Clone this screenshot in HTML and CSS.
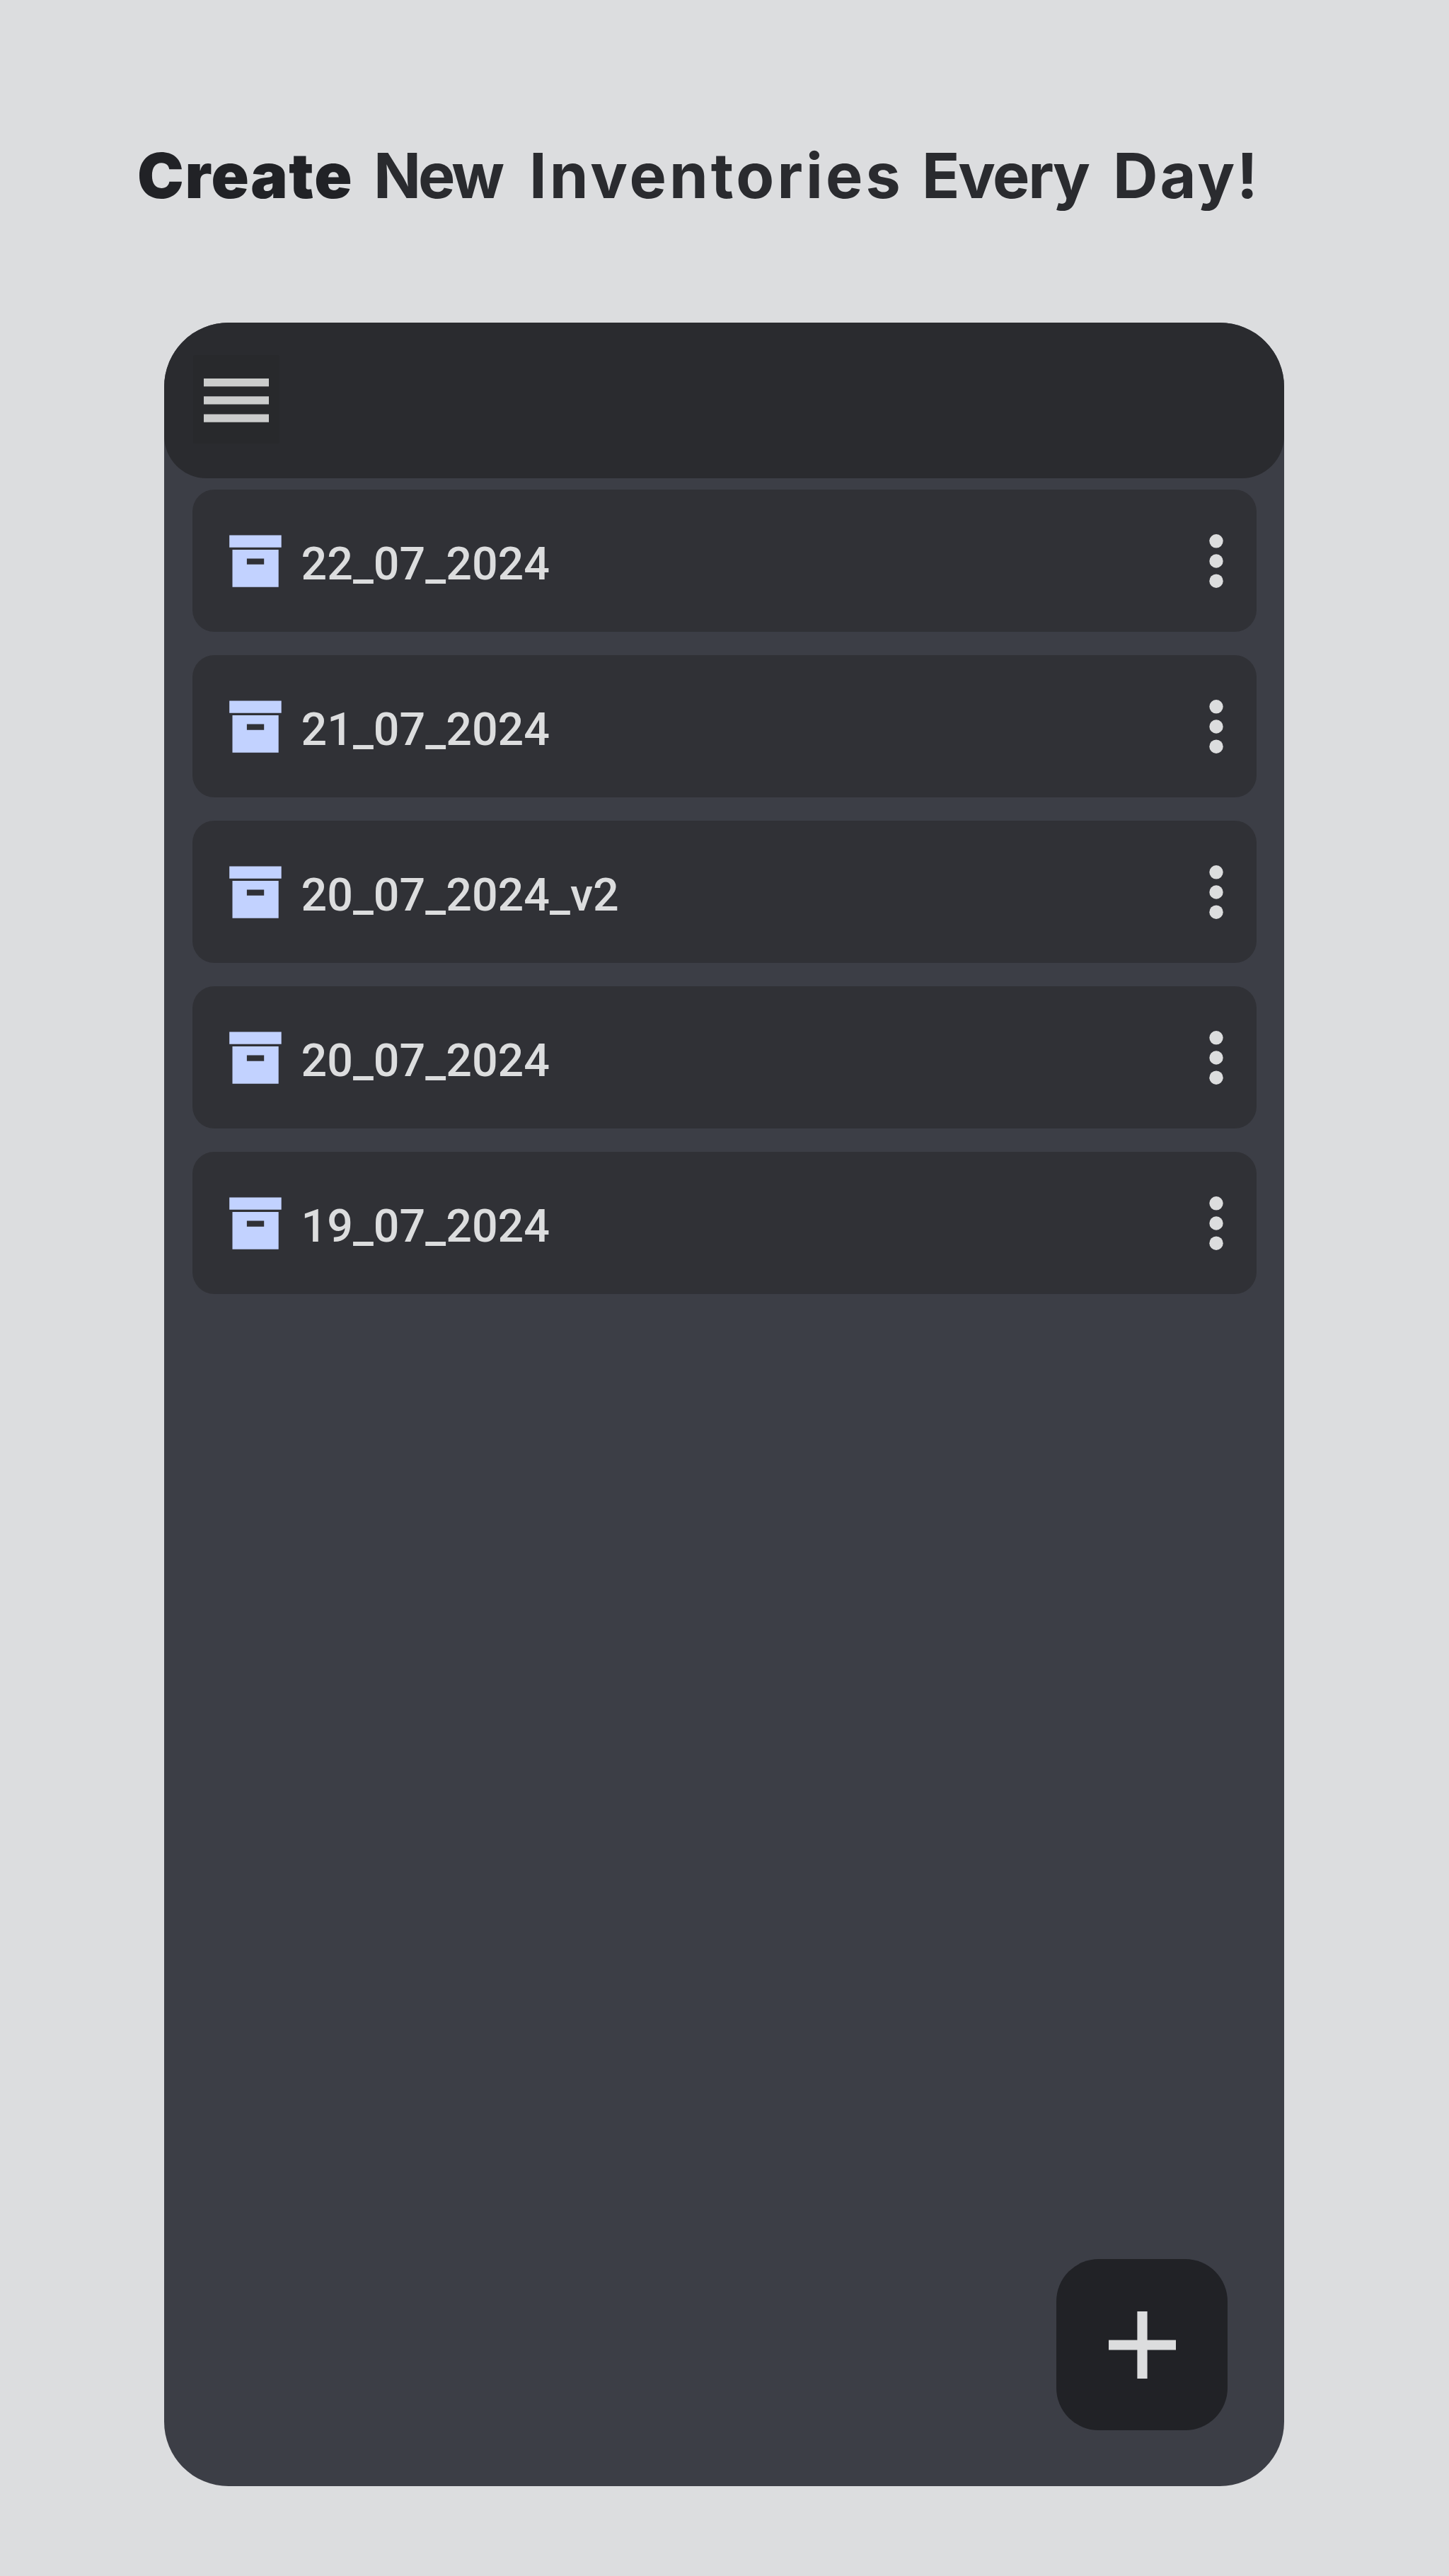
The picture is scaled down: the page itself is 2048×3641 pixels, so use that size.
FILE: index.html
```html
<!DOCTYPE html>
<html lang="en">
<head>
<meta charset="utf-8">
<title>Create New Inventories Every Day!</title>
<link rel="stylesheet" href="styles.css">
</head>
<body>
<svg class="sprite" aria-hidden="true">
  <symbol id="archive" viewBox="0 0 74 74">
    <path d="M.2 .5h73.5v17.2H.2zM4.5 21h65.2v52.7H4.5zM24.9 33.5v8.3h24.3v-8.3z" fill-rule="evenodd"/>
  </symbol>
  <symbol id="more" viewBox="0 0 20 76">
    <circle cx="10" cy="9.8" r="9.7"/><circle cx="10" cy="38" r="9.7"/><circle cx="10" cy="66.2" r="9.7"/>
  </symbol>
</svg>
<h1 class="headline">
  <strong class="create">Create</strong>
  <span class="new">New</span>
  <span class="inventories">Inventories</span>
  <span class="every">Every</span>
  <span class="day">Day!</span>
</h1>
<main class="screen">
  <header class="bar">
    <button class="menu" aria-label="Menu">
      <svg viewBox="0 0 92 62"><path d="M0 0h92v11.2H0zM0 25.3h92v11.2H0zM0 50.5h92v11.2H0z"/></svg>
    </button>
  </header>
  <ul class="list">
    <li class="card"><svg class="archive"><use href="#archive"/></svg><span class="name">22_07_2024</span><svg class="more"><use href="#more"/></svg></li>
    <li class="card"><svg class="archive"><use href="#archive"/></svg><span class="name">21_07_2024</span><svg class="more"><use href="#more"/></svg></li>
    <li class="card"><svg class="archive"><use href="#archive"/></svg><span class="name">20_07_2024_v2</span><svg class="more"><use href="#more"/></svg></li>
    <li class="card"><svg class="archive"><use href="#archive"/></svg><span class="name">20_07_2024</span><svg class="more"><use href="#more"/></svg></li>
    <li class="card"><svg class="archive"><use href="#archive"/></svg><span class="name">19_07_2024</span><svg class="more"><use href="#more"/></svg></li>
  </ul>
  <button class="add" aria-label="Add inventory">
    <svg viewBox="0 0 95 95"><path d="M40.4 0h14.2v40.4H95v14.2H54.6V95H40.4V54.6H0V40.4h40.4z"/></svg>
  </button>
</main>
</body>
</html>
```

FILE: styles.css
```css
* { box-sizing: border-box; }

body {
  margin: 0;
  height: 3641px;
  padding: 204px 233px 0 194px;
  background: #dcdddf;
  font-family: Roboto, sans-serif;
  overflow: hidden;
}

.sprite { display: none; }

button {
  display: grid;
  place-items: center;
  padding: 0;
  border: 0;
}

.headline {
  display: grid;
  grid-template-columns: 334px 220px 555px 270px auto;
  height: 88px;
  margin: 0 0 164px;
  color: #2a2b2f;
  font: 700 88px/88px Inter, sans-serif;
  white-space: nowrap;
}

.create {
  color: #212226;
  font-weight: 900;
  letter-spacing: 1.6px;
}
.new { letter-spacing: -4px; }
.inventories { letter-spacing: 4.1px; }
.every { letter-spacing: -2.3px; }
.day { letter-spacing: 3px; }

.screen {
  display: flex;
  flex-direction: column;
  width: 1583px;
  height: 3058px;
  margin-left: 38px;
  border-radius: 91px;
  background: #3c3e46;
  overflow: hidden;
}

.bar {
  flex: none;
  height: 220px;
  padding: 46px 41px;
  border-radius: 0 0 60px 60px;
  background: #2a2b2f;
}

.menu {
  width: 122px;
  height: 125px;
  padding: 2px 0 0;
  border-radius: 3px;
  background: #28292c;
}
.menu svg {
  width: 92px;
  height: 62px;
  fill: #cbcccc;
}

.list {
  display: flex;
  flex-direction: column;
  gap: 32.5px;
  margin: 0;
  padding: 16px 39.5px 0 40px;
  list-style: none;
}

.card {
  display: flex;
  align-items: center;
  height: 201.4px;
  padding: 1px 46.5px 0 52px;
  border-radius: 31px;
  background: #303136;
}

.archive {
  width: 74px;
  height: 74px;
  fill: #c2d2ff;
}

.name {
  flex: 1;
  padding: 8px 0 0 27.5px;
  color: #dcddde;
  font-size: 64.6px;
  font-weight: 500;
  line-height: 76px;
}

.more {
  width: 20px;
  height: 76px;
  fill: #dcddde;
}

.add {
  align-self: flex-end;
  width: 242px;
  height: 242px;
  margin: auto 80px 79px 0;
  border-radius: 60px;
  background: #212226;
}
.add svg {
  width: 95px;
  height: 95px;
  fill: #dcddde;
}
```
